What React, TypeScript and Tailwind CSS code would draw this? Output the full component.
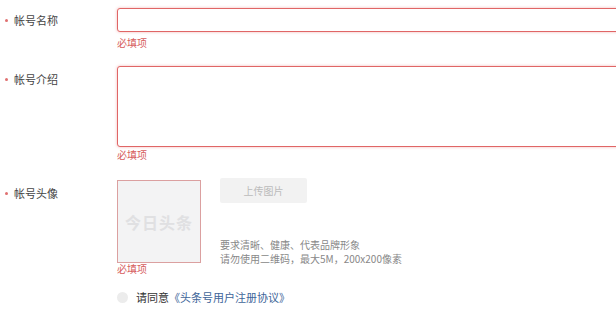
const FONT = { fontFamily: '"Microsoft YaHei", "Noto Sans CJK SC", "Noto Sans", sans-serif' };

function Label({ text, offset }: { text: string; offset: string }) {
  return (
    <div className={`w-[117px] shrink-0 flex items-center pl-[5px] ${offset}`}>
      <span className="w-[3px] h-[3px] rounded-full bg-[#e07070] mr-[6px]" />
      <span className="text-[11px] leading-[14px] text-[#444]">{text}</span>
    </div>
  );
}

function Required() {
  return <p className="text-[10px] leading-[12px] text-[#d65c5c]">必填项</p>;
}

export default function App() {
  return (
    <div className="w-[616px] h-[313px] overflow-hidden bg-white pt-[8px]" style={FONT}>
      {/* 帐号名称 */}
      <div className="flex">
        <Label text="帐号名称" offset="pt-[5px] self-start" />
        <div className="flex flex-col gap-[5px]">
          <div className="w-[560px] h-[24px] rounded-[3px] border border-[#e06666] shadow-[0_0_3px_rgba(230,90,90,0.45)] bg-white" />
          <Required />
        </div>
      </div>

      {/* 帐号介绍 */}
      <div className="flex mt-[17px]">
        <Label text="帐号介绍" offset="pt-[6px] self-start" />
        <div className="flex flex-col gap-[2px]">
          <div className="w-[560px] h-[81px] rounded-[3px] border border-[#e06666] shadow-[0_0_3px_rgba(230,90,90,0.45)] bg-white" />
          <Required />
        </div>
      </div>

      {/* 帐号头像 */}
      <div className="flex mt-[19px]">
        <Label text="帐号头像" offset="pt-[6px] self-start" />
        <div className="flex flex-col">
          <div className="flex gap-[19px]">
            <div className="w-[84px] h-[83px] border border-[#dba0a0] bg-[#f3f3f4] flex items-center justify-center">
              <span className="text-[16px] font-bold text-[#e0e0e2] tracking-[1px]">今日头条</span>
            </div>
            <div className="flex flex-col justify-between -mt-[2px]">
              <div className="w-[87px] h-[25px] rounded-[2px] bg-[#f2f2f2] flex items-center justify-center">
                <span className="text-[10px] text-[#bbb]">上传图片</span>
              </div>
              <div className="text-[10px] leading-[14px] text-[#888] -mb-[3px]">
                <p>要求清晰、健康、代表品牌形象</p>
                <p>请勿使用二维码，最大5M，200x200像素</p>
              </div>
            </div>
          </div>
          <Required />
          <div className="flex items-center mt-[14px]">
            <span className="w-[11px] h-[11px] rounded-full bg-[#ececec] mr-[8px]" />
            <span className="text-[11px] text-[#333]">请同意</span>
            <span className="text-[11px] text-[#406599]">《头条号用户注册协议》</span>
          </div>
        </div>
      </div>
    </div>
  );
}
